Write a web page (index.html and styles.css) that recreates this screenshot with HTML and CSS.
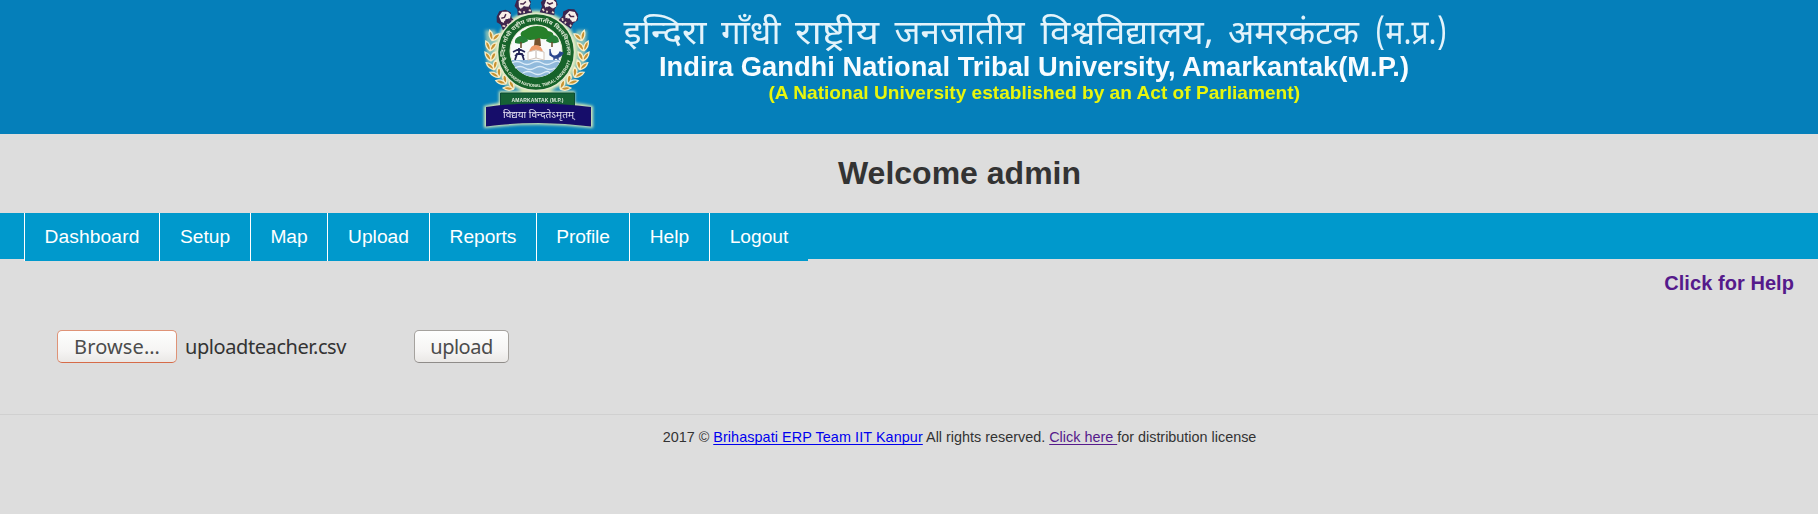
FILE: index.html
```html
<!DOCTYPE html>
<html lang="en">
<head>
<meta charset="utf-8">
<title>Welcome admin</title>
<link rel="stylesheet" href="styles.css">
</head>
<body>
<header class="banner">
  <svg class="banner-art" viewBox="0 0 980 134" width="980" height="134">
    <defs>
      <filter id="glow" x="-10%" y="-10%" width="120%" height="120%"><feGaussianBlur stdDeviation="1.6"/></filter>
      <filter id="soft" x="-5%" y="-5%" width="110%" height="110%"><feGaussianBlur stdDeviation="0.6"/></filter>
      <filter id="softText" x="-5%" y="-20%" width="110%" height="140%"><feGaussianBlur stdDeviation="0.4"/></filter>
      <path id="arcTop" d="M36 60a31 31 0 1 1 60 0"/>
      <path id="arcBottom" d="M30.500 57a36 36 0 0 0 71 0"/>
      <g id="lion">
        <path d="M-8 7l1-6-2-4 3-5 5-3 6 2 3 5-2 5 1 6z" fill="#3b2550"/>
        <path d="M-5-1l1-6 5-2 5 3 1 4-3 3-4-2-3 3z" fill="#f7efe9"/>
        <path d="M-3-4l3 1 3-2M-5 4l3-3 2 3 3-3 2 3" fill="none" stroke="#4b2b4d" stroke-width="1.500"/>
        <path d="M-6 3l2 2M4 4l2 1M-1 4v2" stroke="#e9d6c7" stroke-width="1.700"/>
      </g>
      <g id="leaf"><path d="M0 5q-6-3-6-9 6 2 6 9q-1-8 5-9 0 6-5 9" fill="#c89232" stroke="#f8edc7" stroke-width="1.300"/></g>
      <g id="wheat">
        <use href="#leaf" transform="translate(24 36) rotate(20)"/>
        <use href="#leaf" transform="translate(21 46) rotate(10)"/>
        <use href="#leaf" transform="translate(21 56)"/>
        <use href="#leaf" transform="translate(23 65) rotate(-15)"/>
        <use href="#leaf" transform="translate(27 73) rotate(-28)"/>
        <use href="#leaf" transform="translate(33 80) rotate(-38)"/>
        <use href="#leaf" transform="translate(40 86) rotate(-50)"/>
      </g>
    </defs>
    <g transform="translate(-2 0)">
    <g filter="url(#glow)" fill="#d9e8b4">
      <circle cx="66" cy="52" r="41.500"/><path d="M15 30h10l20 56-6 4-22-26zM117 30h-10L87 86l6 4 22-26z" opacity=".6"/>
      <path d="M29 91h76v12q10 1 18 3v22q-54-7-109 0v-22q8-2 15-3z"/>
    </g>
    <g filter="url(#soft)">
      <use href="#wheat"/><use href="#wheat" transform="matrix(-1 0 0 1 134 0)"/>
      <use href="#lion" transform="translate(36 20) rotate(-32)"/>
      <use href="#lion" transform="translate(54 7) rotate(-12)"/>
      <use href="#lion" transform="translate(79 7) rotate(12)"/>
      <use href="#lion" transform="translate(99 19) rotate(34)"/>
      <circle cx="66" cy="52" r="38.500" fill="#176329" stroke="#e1e8cf" stroke-width="1.500"/>
      <circle cx="66" cy="51" r="26" fill="#f8fafb" stroke="#eef2d9"/>
      <path d="M41.500 60h49a26 26 0 0 1-49 0z" fill="#91badc"/>
      <path d="M42 63q5-3 10 0t10 0 10 0 10 0 8-1M45 68q5-3 10 0t10 0 10 0 10 0M53 73q5-3 10 0t10 0 7 0" fill="none" stroke="#dcecf8" stroke-width="1.300"/>
      <path d="M65 36h5l1 10h-7z" fill="#76512f"/>
      <path d="M52 38q-4-6 3-8 5-4 12-4 9 0 11 5 7 1 5 6-8 4-14 1-9 4-17 0z" fill="#27802b"/>
      <path d="M45 43q-1-5 5-7 7 0 8 5-6 4-13 2zM76 41q1-5 7-6 6 1 6 7-7 3-13-1z" fill="#268137"/>
      <path d="M51 42v6M82 42v5" stroke="#654929" stroke-width="1.500"/>
      <path d="M59 53q1-8 7-8t7 8z" fill="#ed9a6b"/>
      <path d="M58 52l8-2 8 2v8l-8-2-8 2z" fill="#fff" stroke="#d5c6ba"/><path d="M66 51v7" stroke="#bdb3ae"/>
      <path d="M43 52l6-3 6 3M45 56l4-3 5 3M45 60l2-6h5l2 6M49 48v5" fill="none" stroke="#202255" stroke-width="1.800"/>
      <path d="M80 49q0 5 3 7 5 1 7-4l3 1q-3 5-8 5l-5-3zM84 57v3M88 56v4" fill="#29458e" stroke="#29458e" stroke-width="1.300"/>
      <text class="seal-hindi" textLength="108" lengthAdjust="spacingAndGlyphs"><textPath href="#arcTop">इन्दिरा गाँधी राष्ट्रीय जनजातीय विश्वविद्यालय</textPath></text>
      <text class="seal-english" textLength="94" lengthAdjust="spacingAndGlyphs"><textPath href="#arcBottom" startOffset="3">INDIRA GANDHI NATIONAL TRIBAL UNIVERSITY</textPath></text>
      <path d="M30.500 93h74v14h-74z" fill="#176235" stroke="#0d4c35"/>
      <path d="M16 107q51-7 105 0v19.500q-52-7-105 0z" fill="#17106a"/>
      <text class="seal-place" x="41.500" y="102" textLength="52">AMARKANTAK (M.P.)</text>
      <text class="seal-motto" x="33" y="118" textLength="71" lengthAdjust="spacingAndGlyphs">विद्यया विन्दतेऽमृतम्</text>
    </g>
    </g>
    <g class="name-hindi" filter="url(#softText)">
      <text x="151.500" y="44" textLength="83" lengthAdjust="spacingAndGlyphs">इन्दिरा</text>
      <text x="249" y="44" textLength="59.500" lengthAdjust="spacingAndGlyphs">गाँधी</text>
      <text x="323" y="44" textLength="84" lengthAdjust="spacingAndGlyphs">राष्ट्रीय</text>
      <text x="422.500" y="44" textLength="130" lengthAdjust="spacingAndGlyphs">जनजातीय</text>
      <text x="568.500" y="44" textLength="173" lengthAdjust="spacingAndGlyphs">विश्वविद्यालय,</text>
      <text x="756" y="44" textLength="131" lengthAdjust="spacingAndGlyphs">अमरकंटक</text>
      <text x="903" y="44" textLength="72" lengthAdjust="spacingAndGlyphs">(म.प्र.)</text>
    </g>
    <text class="name-english" filter="url(#softText)" x="187" y="76" textLength="750" lengthAdjust="spacingAndGlyphs">Indira Gandhi National Tribal University, Amarkantak(M.P.)</text>
    <text class="name-act" filter="url(#softText)" x="296.500" y="99" textLength="531.500" lengthAdjust="spacingAndGlyphs">(A National University established by an Act of Parliament)</text>
  </svg>
</header>
<h1 class="welcome">Welcome admin</h1>
<nav class="menu">
  <a class="menu-item dashboard">Dashboard</a><a class="menu-item setup">Setup</a><a class="menu-item map">Map</a><a class="menu-item uploads">Upload</a><a class="menu-item reports">Reports</a><a class="menu-item profile">Profile</a><a class="menu-item help-menu">Help</a><a class="menu-item logout">Logout</a>
</nav>
<main class="content">
  <a class="help" href="#help">Click for Help</a>
  <form class="upload">
    <button type="button" class="button browse">Browse…</button>
    <span class="filename">uploadteacher.csv</span>
    <button type="button" class="button submit">upload</button>
  </form>
</main>
<footer class="footer">2017 © <a class="team" href="#team">Brihaspati ERP Team IIT Kanpur</a> All rights reserved. <a class="license" href="#license">Click here&nbsp;</a>for distribution license</footer>
</body>
</html>
```
FILE: styles.css
```css
* { box-sizing: border-box; }
body {
  margin: 0;
  min-height: 514px;
  background: #ddd;
  color: #333;
  font-family: "Liberation Sans", Arial, sans-serif;
}
.banner { height: 134px; padding-left: 472px; background: #057fba; }
.banner-art { display: block; overflow: hidden; }
.name-hindi { fill: #e3f3fb; font: 34px "Noto Sans Devanagari", "Noto Sans", "Lohit Devanagari", sans-serif; }
.name-english { fill: #f8fcff; font: bold 27px "Liberation Sans", sans-serif; }
.name-act { fill: #e8f60a; font: bold 18.500px "Liberation Sans", sans-serif; }
.seal-hindi { fill: #dce8d5; font: bold 5.500px "Noto Sans", sans-serif; }
.seal-english { fill: #eef4e4; font: bold 4.300px "Liberation Sans", sans-serif; }
.seal-place { fill: #e0ebe0; font: bold 5px "Liberation Sans", sans-serif; }
.seal-motto { fill: #e9e4f5; font: 9px "Noto Sans", sans-serif; }
.welcome {
  height: 79px;
  margin: 0;
  padding: 21px 0 0 101px;
  font-size: 32px;
  line-height: 37px;
  text-align: center;
}
.menu { display: flex; height: 46px; padding-left: 24px; background: #09c; }
.menu-item {
  flex: none;
  height: 48px;
  border-left: 1px solid #fff;
  background: #09c;
  color: #fff;
  font-size: 19.200px;
  line-height: 47px;
  text-align: center;
}
.dashboard { width: 135px; letter-spacing: .12px; }
.setup { width: 91px; }
.map { width: 77px; letter-spacing: -.1px; }
.uploads { width: 102px; }
.reports { width: 107px; letter-spacing: -.05px; }
.profile { width: 93px; letter-spacing: -.15px; }
.help-menu { width: 80px; }
.logout { width: 99px; }
.content { height: 155px; padding-top: 13px; }
.help {
  display: block;
  margin-right: 24px;
  color: #551a8b;
  font-size: 20px;
  font-weight: bold;
  letter-spacing: .06px;
  line-height: 23px;
  text-align: right;
  text-decoration: none;
}
.upload { display: flex; align-items: center; height: 33px; margin: 35px 0 0 57px; font: 20px "Noto Sans", sans-serif; }
.button {
  flex: none;
  height: 33px;
  padding: 0;
  border: 1px solid #a5a29e;
  border-bottom-color: #8f8c89;
  border-radius: 5px;
  background: linear-gradient(#fefefe, #f5f4f3 65%, #eae8e6);
  color: #4c4c4c;
  font: inherit;
  line-height: 29px;
}
.browse { width: 120px; border-color: #df9377; border-bottom-color: #d66b48; letter-spacing: .15px; }
.filename { width: 162px; margin: 0 67px 0 8px; letter-spacing: -.42px; white-space: nowrap; }
.submit { width: 95px; letter-spacing: -.5px; }
.footer {
  border-top: 1px solid #d0d0d0;
  padding: 13px 0 0 101px;
  font-size: 14.400px;
  line-height: 18px;
  text-align: center;
}
.footer a { text-decoration: underline; text-decoration-skip-ink: none; text-underline-offset: 2px; }
.team { color: #00e; letter-spacing: .08px; }
.license { color: #551a8b; }
```
